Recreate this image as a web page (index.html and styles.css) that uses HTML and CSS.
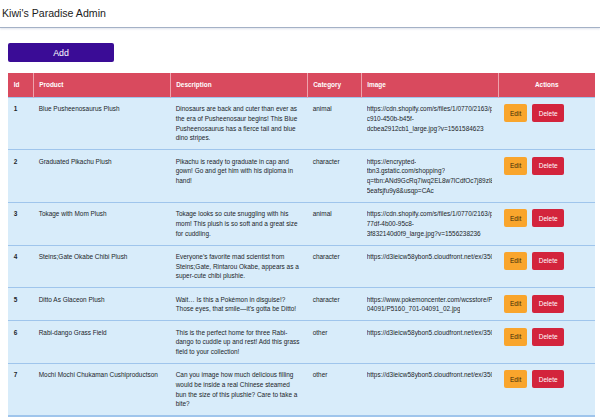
FILE: index.html
```html
<!DOCTYPE html>
<html lang="en">
<head>
<meta charset="utf-8">
<title>Kiwi's Paradise Admin</title>
<link rel="stylesheet" href="styles.css">
</head>
<body>
<header class="topbar">
  <span class="brand">Kiwi's Paradise Admin</span>
</header>
<main class="content">
  <button class="btn-add" type="button">Add</button>
  <table class="grid">
    <colgroup>
      <col class="c-id"><col class="c-product"><col class="c-desc"><col class="c-cat"><col class="c-img"><col class="c-act">
    </colgroup>
    <thead>
      <tr><th>Id</th><th>Product</th><th>Description</th><th>Category</th><th>Image</th><th class="th-actions">Actions</th></tr>
    </thead>
    <tbody>
      <tr>
        <td class="id">1</td>
        <td>Blue Pusheenosaurus Plush</td>
        <td>Dinosaurs are back and cuter than ever as the era of Pusheenosaur begins! This Blue Pusheenosaurus has a fierce tail and blue dino stripes.</td>
        <td>animal</td>
        <td class="url"><span class="seg">https://cdn.shopify.com/s/files/1/0770/2163/products/5b2e7a41-</span><wbr><span class="seg">c910-450b-b45f-</span><wbr><span class="seg">dcbea2912cb1_large.jpg?v=1561584623</span></td>
        <td><div class="actions"><button class="btn btn-edit" type="button">Edit</button><button class="btn btn-delete" type="button">Delete</button></div></td>
      </tr>
      <tr>
        <td class="id">2</td>
        <td>Graduated Pikachu Plush</td>
        <td>Pikachu is ready to graduate in cap and gown! Go and get him with his diploma in hand!</td>
        <td>character</td>
        <td class="url"><span class="seg">https://encrypted-</span><wbr><span class="seg">tbn3.gstatic.com/shopping?</span><wbr><span class="seg">q=tbn:ANd9GcRq7iwq2EL8w7lCdfOc7j89zl8Qk3Vx0pLmT-</span><wbr><span class="seg">5eafsjfu9y8&amp;usqp=CAc</span></td>
        <td><div class="actions"><button class="btn btn-edit" type="button">Edit</button><button class="btn btn-delete" type="button">Delete</button></div></td>
      </tr>
      <tr>
        <td class="id">3</td>
        <td>Tokage with Mom Plush</td>
        <td>Tokage looks so cute snuggling with his mom! This plush is so soft and a great size for cuddling.</td>
        <td>animal</td>
        <td class="url"><span class="seg">https://cdn.shopify.com/s/files/1/0770/2163/products/8c4d1f93-</span><wbr><span class="seg">77df-4b00-95c8-</span><wbr><span class="seg">3f832140d0f9_large.jpg?v=1556238236</span></td>
        <td><div class="actions"><button class="btn btn-edit" type="button">Edit</button><button class="btn btn-delete" type="button">Delete</button></div></td>
      </tr>
      <tr>
        <td class="id">4</td>
        <td>Steins;Gate Okabe Chibi Plush</td>
        <td>Everyone’s favorite mad scientist from Steins;Gate, Rintarou Okabe, appears as a super-cute chibi plushie.</td>
        <td>character</td>
        <td class="url"><span class="seg">https://d3ieicw58ybon5.cloudfront.net/ex/350.350/shop/product/4f1b2c7d9e.jpg</span></td>
        <td><div class="actions"><button class="btn btn-edit" type="button">Edit</button><button class="btn btn-delete" type="button">Delete</button></div></td>
      </tr>
      <tr>
        <td class="id">5</td>
        <td>Ditto As Glaceon Plush</td>
        <td>Wait… Is this a Pokémon in disguise!? Those eyes, that smile—it’s gotta be Ditto!</td>
        <td>character</td>
        <td class="url"><span class="seg">https://www.pokemoncenter.com/wcsstore/PokemonCatalogAssetStore/images/catalog/products/P5160/701-</span><wbr><span class="seg">04091/P5160_701-04091_02.jpg</span></td>
        <td><div class="actions"><button class="btn btn-edit" type="button">Edit</button><button class="btn btn-delete" type="button">Delete</button></div></td>
      </tr>
      <tr>
        <td class="id">6</td>
        <td>Rabi-dango Grass Field</td>
        <td>This is the perfect home for three Rabi-dango to cuddle up and rest! Add this grass field to your collection!</td>
        <td>other</td>
        <td class="url"><span class="seg">https://d3ieicw58ybon5.cloudfront.net/ex/350.350/shop/product/8a3e6d0c5b.jpg</span></td>
        <td><div class="actions"><button class="btn btn-edit" type="button">Edit</button><button class="btn btn-delete" type="button">Delete</button></div></td>
      </tr>
      <tr>
        <td class="id">7</td>
        <td>Mochi Mochi Chukaman Cushiproductson</td>
        <td>Can you image how much delicious filling would be inside a real Chinese steamed bun the size of this plushie? Care to take a bite?</td>
        <td>other</td>
        <td class="url"><span class="seg">https://d3ieicw58ybon5.cloudfront.net/ex/350.350/shop/product/2d7f9b1e4a.jpg</span></td>
        <td><div class="actions"><button class="btn btn-edit" type="button">Edit</button><button class="btn btn-delete" type="button">Delete</button></div></td>
      </tr>
    </tbody>
  </table>
</main>
</body>
</html>
```

FILE: styles.css
```css
html, body {
  margin: 0;
  padding: 0;
  overflow: hidden;
}

body {
  font-family: "Liberation Sans", Arial, sans-serif;
  color: #212529;
  background: #ffffff;
}

.topbar {
  height: 27px;
  padding-left: 2px;
  border-bottom: 1px solid #a4b1c6;
  box-shadow: 0 1px 2px rgba(160, 175, 200, 0.35);
}

.brand {
  display: block;
  font-size: 10.6px;
  line-height: 26px;
  color: #1c1c1c;
}

.content {
  padding: 15px 5px 0 8px;
}

.btn-add {
  display: block;
  width: 106px;
  height: 19px;
  padding: 0;
  border: none;
  border-radius: 2px;
  background: #3a0c96;
  color: #ffffff;
  font-family: inherit;
  font-size: 8.8px;
}

.grid {
  margin-top: 11px;
  width: 587px;
  table-layout: fixed;
  border-collapse: collapse;
  font-size: 6.45px;
  line-height: 9.7px;
}

.c-id { width: 25px; }
.c-product { width: 137px; }
.c-desc { width: 137px; }
.c-cat { width: 54px; }
.c-img { width: 137px; }
.c-act { width: 97px; }

.grid th {
  height: 24px;
  padding: 0 5.7px;
  background: #d94a5e;
  color: #ffffff;
  font-weight: bold;
  text-align: left;
  border-right: 1px solid #eea3ad;
}

.grid th:last-child {
  border-right: none;
}

.grid .th-actions {
  text-align: center;
}

.grid td {
  padding: 6.3px 5.7px;
  vertical-align: top;
  background: #d8ecfa;
  border-top: 1px solid #9fc5ec;
  overflow: hidden;
}

.grid tbody tr:last-child td {
  border-bottom: 2px solid #9fc5ec;
}

.grid td.id {
  font-weight: bold;
}

.seg {
  display: inline-block;
  max-width: 100%;
  overflow: hidden;
  white-space: nowrap;
  vertical-align: top;
}

.actions {
  display: flex;
  gap: 5px;
}

.btn {
  height: 18px;
  padding: 0 6.3px;
  border: none;
  border-radius: 2px;
  font-family: inherit;
  font-size: 6.5px;
}

.btn-edit {
  background: #f9a52c;
  color: #3a2a08;
}

.btn-delete {
  background: #d3243c;
  color: #ffffff;
}
```
